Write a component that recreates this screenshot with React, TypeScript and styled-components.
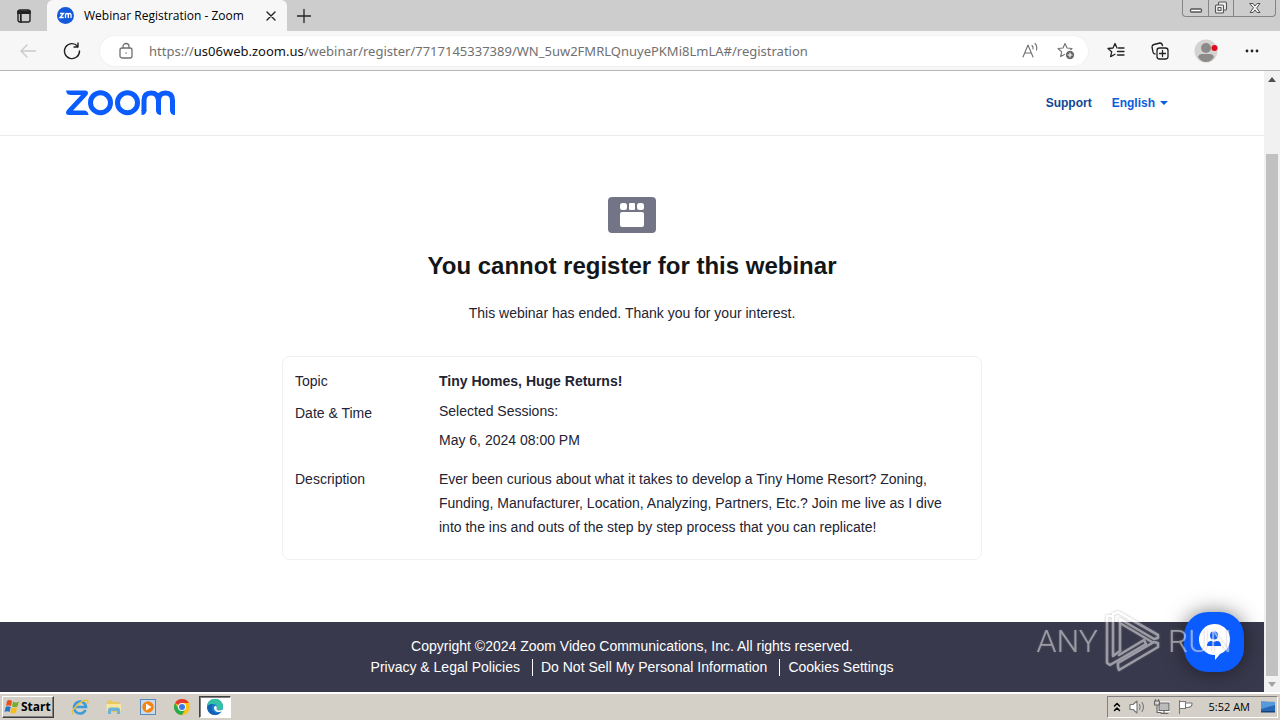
import React from 'react';
import styled, { createGlobalStyle } from 'styled-components';

const Global = createGlobalStyle`
  * { box-sizing: border-box; }
  body { margin: 0; background: #fff; font-family: "Liberation Sans", Arial, sans-serif; }
  button { font: inherit; padding: 0; border: 0; background: none; color: inherit; }
  a { color: inherit; text-decoration: none; }
  svg { display: block; }
`;

const Screen = styled.div`
  display: flex;
  flex-direction: column;
  height: 100vh;
`;

const TabStrip = styled.header`
  display: flex;
  flex: none;
  height: 31px;
  background: #cdcdcd;
`;
const IconButton = styled.button<{ $w: number; $h?: number }>`
  display: flex;
  flex: none;
  align-items: center;
  justify-content: center;
  width: ${p => p.$w}px;
  height: ${p => p.$h ?? 32}px;
`;
const Tab = styled.div`
  display: flex;
  align-items: center;
  flex: 0 1 240px;
  gap: 10px;
  padding: 0 8px 0 10px;
  background: #f7f7f7;
  border-radius: 6px 6px 0 0;
  font: 12px "Open Sans", sans-serif;
`;
const TabTitle = styled.span`
  flex: 1;
  white-space: nowrap;
`;
const WindowButtons = styled.div`
  display: flex;
  margin-left: auto;
  margin-right: 4px;
  height: 17px;
  border: 1px solid #858585;
  border-top: 0;
  border-radius: 0 0 4px 4px;
  button + button { border-left: 1px solid #858585; }
`;

const Toolbar = styled.div`
  display: flex;
  flex: none;
  align-items: center;
  height: 40px;
  padding: 0 6px;
  background: #f7f7f7;
  border-bottom: 1px solid #b5b5b5;
`;
const AddressBar = styled.div`
  display: flex;
  flex: 1;
  align-items: center;
  height: 30px;
  margin: 0 6px;
  padding: 0 4px 0 8px;
  border-radius: 15px;
  background: #fff;
  box-shadow: 0 0 0 1px #f1f1f1;
`;
const Url = styled.div`
  flex: 1;
  padding-left: 5px;
  color: #707070;
  font: 13px "Noto Sans", sans-serif;
  white-space: nowrap;
  b { color: #111; font-weight: 400; }
`;

const Viewport = styled.div`
  display: flex;
  flex: 1;
  min-height: 0;
`;
const Page = styled.div`
  display: flex;
  flex: 1;
  flex-direction: column;
  min-width: 0;
`;
const SiteHeader = styled.header`
  display: flex;
  flex: none;
  align-items: center;
  justify-content: space-between;
  height: 65px;
  padding: 0 96px 0 65px;
  border-bottom: 1px solid #ebebee;
`;
const Nav = styled.nav`
  display: flex;
  gap: 20px;
  color: #0e4793;
  font-size: 12px;
  font-weight: 700;
`;
const Language = styled.button`
  display: flex;
  align-items: center;
  gap: 5px;
  color: #0b5cdc;
`;
const Caret = styled.i`
  border: 4px solid transparent;
  border-top-color: currentColor;
  border-bottom: 0;
`;
const Main = styled.main`
  display: flex;
  flex: 1;
  flex-direction: column;
  align-items: center;
  padding-top: 61px;
  color: #232333;
`;
const Title = styled.h1`
  margin: 17px 0 0;
  color: #131619;
  font-size: 24px;
  line-height: 32px;
`;
const Notice = styled.p`
  margin: 19px 0 0;
  font-size: 14px;
  line-height: 24px;
`;
const Card = styled.dl`
  display: grid;
  grid-template-columns: 144px 1fr;
  width: 700px;
  max-width: 100%;
  margin: 31px 0 0;
  padding: 12px 28px 20px 12px;
  border: 1px solid #f0f0f3;
  border-radius: 8px;
  font-size: 14px;
  line-height: 24px;
`;
const Label = styled.dt`
  padding-bottom: 8px;
`;
const Value = styled.dd<{ $strong?: boolean }>`
  margin: 0;
  font-weight: ${p => (p.$strong ? 700 : 400)};
`;
const Session = styled.p`
  margin: 0;
  padding-bottom: 7px;
  line-height: 24px;
  &:first-child { line-height: 20px; }
  &:last-child { padding-bottom: 15px; }
`;
const Footer = styled.footer`
  flex: none;
  height: 70px;
  padding-top: 14px;
  background: #39394d;
  color: #fff;
  font-size: 14px;
  line-height: 21px;
  text-align: center;
`;
const FooterLinks = styled.div`
  display: flex;
  align-items: center;
  justify-content: center;
  a + a { margin-left: 12px; padding-left: 9px; box-shadow: inset 1px 0 #fff; line-height: 17px; }
`;

const Scrollbar = styled.div`
  display: flex;
  flex: none;
  flex-direction: column;
  width: 16px;
  background: #f1f1f1;
`;
const Thumb = styled.div`
  flex: 1;
  margin: 67px 2px 0;
  background: #c1c1c1;
`;

const ChatButton = styled.button`
  position: fixed;
  right: 36px;
  bottom: 48px;
  display: flex;
  align-items: center;
  justify-content: center;
  width: 60px;
  height: 60px;
  border-radius: 24px;
  background: #0b5cff;
  box-shadow: 0 0 20px rgba(0, 0, 0, 0.5);
`;
const Watermark = styled.div`
  position: fixed;
  right: 48px;
  bottom: 48px;
  display: flex;
  align-items: center;
  gap: 7px;
  opacity: 0.5;
  color: #fff;
  font: 300 32px Roboto, "Liberation Sans", sans-serif;
  filter: drop-shadow(0 0 1px #777);
  pointer-events: none;
`;

const Taskbar = styled.footer`
  display: flex;
  flex: none;
  align-items: center;
  height: 28px;
  padding: 0 2px 1px;
  background: #d4d0c8;
  border-top: 2px solid #fff;
`;
const Start = styled.button`
  display: flex;
  align-items: center;
  gap: 1px;
  width: 52px;
  height: 22px;
  margin-right: 9px;
  padding-left: 1px;
  border: 1px solid;
  border-color: #fff #404040 #404040 #fff;
  box-shadow: inset -1px -1px #808080;
  font: 700 12px "Open Sans", sans-serif;
`;
const TaskButton = styled.button<{ $active?: boolean }>`
  display: flex;
  align-items: center;
  justify-content: center;
  width: ${p => (p.$active ? 32 : 34)}px;
  height: 22px;
  ${p => p.$active && 'background: #fff; border: 1px solid; border-color: #404040 #fff #fff #404040; box-shadow: inset 1px 1px #808080;'}
`;
const Tray = styled.div`
  display: flex;
  align-items: center;
  height: 22px;
  margin-left: auto;
  padding: 0 1px 0 5px;
  gap: 7px;
  border: 1px solid;
  border-color: #808080 #fff #fff #808080;
  font: 11px "Open Sans", sans-serif;
`;
const Clock = styled.time`
  padding: 0 3px 0 8px;
`;

const Line: React.FC<{ w: number; h?: number; c?: string; sw?: number; children: React.ReactNode }> =
  ({ w, h = w, c = '#222', sw = 1.3, children }) => (
    <svg width={w} height={h} viewBox={`0 0 ${w} ${h}`} fill="none" stroke={c} strokeWidth={sw} strokeLinecap="round" strokeLinejoin="round">{children}</svg>
  );
const STAR = 'M8 1.5 L10 6 L15 6.5 L11.3 9.8 L12.4 14.6 L8 12.2 L3.6 14.6 L4.7 9.8 L1 6.5 L6 6 Z';

const ZoomLogo = () => (
  <svg width="111" height="26" viewBox="0 0 111 26" fill="none" stroke="#0b5cff" strokeWidth="5">
    <path d="M1 .5H20q3 0 3 2.5 0 1.5-1.5 3L8 20.500H19q4 0 4.500 4.500H4Q1 25 1 22.500q0-1.500 1.500-3L16 5H6Q1.500 5 1 .5Z" fill="#0b5cff" stroke="none" />
    <circle cx="35.500" cy="12.700" r="10" />
    <circle cx="62.500" cy="12.700" r="10" />
    <path d="M79 21V10.500Q79 3 86 3t7.500 7.500V21V10.500Q93.500 3 100.500 3t7 7.500V21" />
    <path d="M76.500 20h5q0 5-5 5ZM96 25q-5 0-5-5h5ZM110 25q-5 0-5-5h5Z" fill="#0b5cff" stroke="none" />
  </svg>
);

const FlagLogo = () => (
  <svg width="16" height="16" viewBox="0 0 16 16">
    <path d="M3 2q2-2 5 0L7 7Q4 5.500 2 7Z" fill="#e8501f" /><path d="M9 2.500q3 2 6 0L13.500 7.500Q11 9 8 7.500Z" fill="#78ae2c" />
    <path d="M1.700 8q2-1.500 5 0L5.500 13Q3 11.500.5 13Z" fill="#2676c8" /><path d="M7.600 8.500q3 1.500 5.500 0L12 13.500q-3 2-5.700 0Z" fill="#f7bd19" />
  </svg>
);
const ExplorerIcon = () => (
  <svg width="18" height="18" viewBox="0 0 18 18" fill="none">
    <path d="M14.500 12A6 6 0 1 1 15 9H5" stroke="#3d9bd8" strokeWidth="2.600" />
    <path d="M2.500 16Q-1 14 6 7.500T16.500 2.500q1 1-.3 3.500" stroke="#ecc23c" strokeWidth="1.500" />
  </svg>
);
const FolderIcon = () => (
  <svg width="18" height="18" viewBox="0 0 18 18">
    <path d="M2 4l1-1.500h4L8.500 4H15v10H2Z" fill="#e7c95e" /><path d="M1.500 6h14.500v7H1.500Z" fill="#f6e6a0" />
    <path d="M3 16v-4q0-2.500 2.500-2.500h7Q15 9.500 15 12v4h-3v-3H6v3Z" fill="#6db3d8" />
  </svg>
);
const PlayerIcon = () => (
  <svg width="16" height="16" viewBox="0 0 16 16">
    <rect x=".5" y=".5" width="15" height="15" fill="#c8dcf0" stroke="#5689bd" /><circle cx="8" cy="8" r="5.800" fill="#f58410" /><path d="M6 4.500v7L11.500 8Z" fill="#fff" />
  </svg>
);
const ChromeIcon = () => (
  <svg width="16" height="16" viewBox="0 0 16 16">
    <circle cx="8" cy="8" r="8" fill="#fbc116" /><path d="M8 8L1.070 4A8 8 0 0 1 14.930 4H8Z" fill="#e33b2e" /><path d="M1.070 4A8 8 0 0 0 8 16l3.460-6L8 8 4.540 10Z" fill="#2da94f" />
    <circle cx="8" cy="8" r="4" fill="#fff" /><circle cx="8" cy="8" r="3" fill="#3a79e8" />
  </svg>
);
const EdgeIcon = () => (
  <svg width="16" height="16" viewBox="0 0 16 16">
    <circle cx="8" cy="8" r="8" fill="#1b7fd0" /><path d="M0 8A8 8 0 0 1 16 7.500Q16 11 12 11q-2 0-2.500-1Q11 5.500 6.500 5 2 5 0 8Z" fill="#35bfa5" />
    <path d="M0 8q2-3.500 6.500-3Q3 8 6 12q2.500 3 7.500 1.500Q11 16 8 16 1 16 0 8Z" fill="#1261b5" /><path d="M8 7q-2 2 0 4.500t6.500 1q1.500-1 1-2-5 2-6-.5 1-1.500-.5-3Z" fill="#fff" />
  </svg>
);

const WatermarkLogo = () => (
  <svg width="56" height="62" viewBox="0 0 56 62" fill="none" stroke="#fff" strokeWidth="2.600" strokeLinejoin="round" strokeLinecap="round">
    <path d="M7 6H2v47l3 2 36-21-2-4-25 15" />
    <path d="M8 45V4l5-2 40 23v3l-4 1L15 9v32l-7 5" />
    <path d="M15 13l32 19M13 57l1 3 39-23v-4l-4-1-36 21Z" />
  </svg>
);

export default function App() {
  return (
    <Screen>
      <Global />
      <TabStrip>
        <IconButton $w={47} aria-label="Tab actions">
          <Line w={14} sw={1.4}><rect x="1" y="1" width="12" height="12" rx="2" /><path d="M1 2.500h12M1 4h12M3.800 4v9" strokeWidth="1.800" /></Line>
        </IconButton>
        <Tab>
          <svg width="17" height="17" viewBox="0 0 17 17"><circle cx="8.500" cy="8.500" r="8.500" fill="#1458dc" /><path d="M3 6.500h3.500L3 10.500h3.700M8.500 11V8q0-1.500 1.400-1.500T11.300 8v3M11.300 8q0-1.500 1.400-1.500T14 8v3" fill="none" stroke="#fff" strokeWidth="1.300" /></svg>
          <TabTitle>Webinar Registration - Zoom</TabTitle>
          <button aria-label="Close tab"><Line w={16} sw={1.4}><path d="M4 4l8 8M12 4l-8 8" /></Line></button>
        </Tab>
        <IconButton $w={34} aria-label="New tab"><Line w={16}><path d="M8 1.500v13M1.500 8h13" /></Line></IconButton>
        <WindowButtons>
          <IconButton $w={25} $h={16} aria-label="Minimize"><Line w={14} c="#555"><rect x="1.500" y="8" width="11" height="3" rx="1" fill="#fff" /></Line></IconButton>
          <IconButton $w={25} $h={16} aria-label="Restore"><Line w={14} c="#555" sw={1.1}><rect x="4.500" y="1" width="8" height="8" rx="1" fill="#eee" /><rect x="1.500" y="4" width="8" height="8" rx="1" fill="#eee" /><rect x="4" y="6.500" width="3" height="3" /></Line></IconButton>
          <IconButton $w={42} $h={16} aria-label="Close"><Line w={12} c="#555" sw={1}><path d="M1 1.500h3L6 4l2-2.500h3L7.700 6 11 10.500H8L6 8l-2 2.500H1L4.300 6Z" fill="#eee" /></Line></IconButton>
        </WindowButtons>
      </TabStrip>
      <Toolbar>
        <IconButton $w={44} aria-label="Back"><Line w={18} c="#c9c9c9"><path d="M16.500 9H2M8 3L2 9l6 6" /></Line></IconButton>
        <IconButton $w={44} aria-label="Refresh"><Line w={18} sw={1.4}><path d="M16.500 9A7.500 7.500 0 1 1 14.500 4M15 1v4h-4" /></Line></IconButton>
        <AddressBar>
          <IconButton $w={36} aria-label="Site information"><Line w={16} h={18} c="#707070"><rect x="2" y="6" width="12" height="10" rx="2" /><path d="M5 6V4.500a3 3 0 0 1 6 0V6M8 10.800v.4" /></Line></IconButton>
          <Url>https://<b>us06web.zoom.us</b>/webinar/register/7717145337389/WN_5uw2FMRLQnuyePKMi8LmLA#/registration</Url>
          <IconButton $w={36} aria-label="Read aloud"><Line w={18} c="#707070" sw={1.1}><path d="M2 15L7 3l5 12M3.700 11h6.600M11 3.500q1.500 1.500 1 3.500M14 1.500q2.500 2.500 1.500 6.500" /></Line></IconButton>
          <IconButton $w={36} aria-label="Add to favorites"><Line w={18} c="#707070" sw={1.1}><path d={STAR} /><circle cx="13" cy="13" r="4.700" fill="#666" stroke="#fff" /><path d="M13 11v4M11 13h4" stroke="#fff" /></Line></IconButton>
        </AddressBar>
        <IconButton $w={44} aria-label="Favorites"><Line w={18}><path d="M10 6L8 1.500 6 6 1 6.500l3.700 3.300-1.100 4.800L8 12.200M11.500 6H17M10.500 9.500H17M10.500 13H17" /></Line></IconButton>
        <IconButton $w={44} aria-label="Collections"><Line w={18}><rect x="6" y="6" width="11" height="11" rx="2.500" /><path d="M11.500 8.500v6M8.500 11.500h6M4 12Q2.500 12 2 10L1 5q0-2 2-2.500L9 1q2 0 2.500 2.500" /></Line></IconButton>
        <IconButton $w={48} aria-label="Profile"><svg width="24" height="24" viewBox="0 0 24 24"><circle cx="12" cy="12" r="11.500" fill="#d5d3d1" /><circle cx="12" cy="9" r="5" fill="#8d8b8a" /><path d="M4 18q1-3 4-3h8q3 0 4 3-3 5-8 5t-8-5Z" fill="#8d8b8a" /><circle cx="20.500" cy="9" r="3" fill="#e00b1c" /></svg></IconButton>
        <IconButton $w={44} aria-label="Settings and more"><svg width="14" height="4" fill="#222"><circle cx="2" cy="2" r="1.400" /><circle cx="7" cy="2" r="1.400" /><circle cx="12" cy="2" r="1.400" /></svg></IconButton>
      </Toolbar>

      <Viewport>
        <Page>
          <SiteHeader>
            <a href="#home" aria-label="Zoom"><ZoomLogo /></a>
            <Nav><a href="#support">Support</a><Language>English <Caret /></Language></Nav>
          </SiteHeader>
          <Main>
            <svg width="48" height="36" viewBox="0 0 48 36"><rect width="48" height="36" rx="4" fill="#747487" /><g fill="#fff"><rect x="12" y="6" width="7" height="7" rx="2.500" /><rect x="21" y="6" width="6" height="7" rx="1" /><rect x="29" y="6" width="7" height="7" rx="2.500" /><rect x="12" y="15" width="24" height="15" rx="2" /></g></svg>
            <Title>You cannot register for this webinar</Title>
            <Notice>This webinar has ended. Thank you for your interest.</Notice>
            <Card>
              <Label>Topic</Label><Value $strong>Tiny Homes, Huge Returns!</Value>
              <Label>Date &amp; Time</Label>
              <Value><Session>Selected Sessions:</Session><Session>May 6, 2024 08:00 PM</Session></Value>
              <Label>Description</Label>
              <Value>Ever been curious about what it takes to develop a Tiny Home Resort? Zoning, Funding, Manufacturer, Location, Analyzing, Partners, Etc.? Join me live as I dive into the ins and outs of the step by step process that you can replicate!</Value>
            </Card>
          </Main>
          <Footer>
            <div>Copyright ©2024 Zoom Video Communications, Inc. All rights reserved.</div>
            <FooterLinks><a href="#privacy">Privacy &amp; Legal Policies</a><a href="#personal">Do Not Sell My Personal Information</a><a href="#cookies">Cookies Settings</a></FooterLinks>
          </Footer>
        </Page>
        <Scrollbar>
          <IconButton $w={16} $h={16} aria-label="Scroll up"><svg width="8" height="5" fill="#505050"><path d="M0 5l4-5 4 5Z" /></svg></IconButton>
          <Thumb />
          <IconButton $w={16} $h={16} aria-label="Scroll down"><svg width="8" height="5" fill="#a3a3a3"><path d="M0 0l4 5 4-5Z" /></svg></IconButton>
        </Scrollbar>
      </Viewport>

      <Taskbar>
        <Start><FlagLogo />Start</Start>
        <TaskButton aria-label="Internet Explorer"><ExplorerIcon /></TaskButton>
        <TaskButton aria-label="Files"><FolderIcon /></TaskButton>
        <TaskButton aria-label="Media Player"><PlayerIcon /></TaskButton>
        <TaskButton aria-label="Chrome"><ChromeIcon /></TaskButton>
        <TaskButton $active aria-label="Edge"><EdgeIcon /></TaskButton>
        <Tray>
          <Line w={8} h={12} c="#000" sw={1.5}><path d="M1.500 5L4 2.500 6.500 5M1.500 9.500L4 7l2.500 2.500" /></Line>
          <Line w={18} h={16} c="#777" sw={1.1}><path d="M2 5.500h3l4-3.500v12l-4-3.500H2Z" fill="#fff" /><path d="M11.500 5.500q1.500 2.500 0 5M14 3.500q3 4.500 0 9" /></Line>
          <Line w={17} h={16} c="#666" sw={1.1}><rect x="6" y="4" width="10" height="7.500" fill="#aaa" stroke="#fff" strokeWidth="3" /><rect x="6" y="4" width="10" height="7.500" fill="#bbb" /><path d="M8 14.500h7M11 12v2M1.500 2h5v4h-5ZM2.500 .5V2M5.500.5V2M4 6v7.500h4" /></Line>
          <Line w={17} h={16} c="#777" sw={1.1}><path d="M2.500 1.500v13M2.500 2.500h6v7h-6M8.500 4H15q.5 4-4 4.500H8.500" fill="#fff" /></Line>
          <Clock>5:52 AM</Clock>
          <svg width="16" height="14" viewBox="0 0 16 14"><path d="M1 1.500L15 2v9H1Z" fill="#2867b5" /><path d="M1 1.500L15 2v3L1 9Z" fill="#569add" /><path d="M1 11h14v1.500H1Z" fill="#173f78" /></svg>
        </Tray>
      </Taskbar>

      <ChatButton aria-label="Chat">
        <svg width="32" height="38" viewBox="0 0 32 38"><path d="M16 1a15.500 15.500 0 0 1 6 30l-5 6v-5A15.500 15.500 0 0 1 16 1Z" fill="#fff" /><circle cx="16" cy="12.500" r="4" fill="#0b5cff" /><path d="M9 23q0-5 4.500-5 2.500 1.500 5 0Q23 18 23 23Z" fill="#0b5cff" /></svg>
      </ChatButton>
      <Watermark><span>ANY</span><WatermarkLogo /><span>RUN</span></Watermark>
    </Screen>
  );
}
